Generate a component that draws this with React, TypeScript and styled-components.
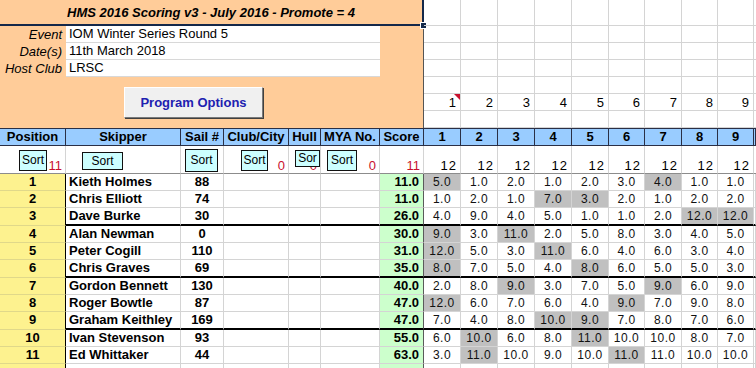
import React from 'react';
import styled, { createGlobalStyle } from 'styled-components';

const GlobalStyle = createGlobalStyle`
  html, body { margin: 0; padding: 0; background: #fff; }
  body {
    font-family: "Liberation Sans", Arial, sans-serif;
    font-size: 13px;
    color: #000;
  }
`;

const COLS = '66px 115px 43px 65px 32px 59px 44px 37px 37px 37px 37px 37px 36px 37px 36px 36px 1fr';
const RACE_COLS = '37px 37px 37px 37px 37px 36px 37px 36px 36px 1fr';
const GRID = '#d4d4d4';
const DARK = '#2a2f45';

const Sheet = styled.div`
  width: 756px;
  height: 368px;
  overflow: hidden;
  display: flex;
  flex-direction: column;
`;

const Top = styled.div`
  display: flex;
  height: 128px;
  flex-shrink: 0;
`;

const Panel = styled.div`
  position: relative;
  width: 424px;
  flex-shrink: 0;
  box-sizing: border-box;
  background: #ffcc99;
  border-right: 1px solid #555;
  display: flex;
  flex-direction: column;
`;

const Title = styled.div`
  height: 26px;
  box-sizing: border-box;
  margin-right: -1px;
  border-bottom: 2px solid #14284a;
  border-right: 2px solid #14284a;
  display: flex;
  align-items: center;
  justify-content: center;
  font-weight: bold;
  font-style: italic;
`;

const Handle = styled.div`
  position: absolute;
  right: -4px;
  top: 22px;
  width: 5px;
  height: 5px;
  background: #14284a;
  border: 1px solid #fff;
`;

const InfoRow = styled.div`
  display: grid;
  grid-template-columns: 66px 314px;
  height: 17px;
`;

const InfoLabel = styled.div`
  text-align: right;
  padding-right: 4px;
  font-style: italic;
  line-height: 17px;
`;

const InfoValue = styled.div`
  background: #fff;
  padding-left: 3px;
  box-sizing: border-box;
  border-bottom: 1px solid #d8d8d8;
  line-height: 16px;
`;

const ButtonRow = styled.div`
  display: flex;
  padding: 10px 0 0 124px;
`;

const ProgramButton = styled.button`
  width: 139px;
  height: 31px;
  background: #f0f0f0;
  border: 1px solid;
  border-color: #fff #7a7a7a #7a7a7a #fff;
  box-shadow: 1px 1px 0 #404040;
  font-family: "Liberation Sans", Arial, sans-serif;
  font-weight: bold;
  font-size: 13px;
  color: #2020b0;
  padding: 0;
`;

const TopGrid = styled.div`
  flex: 1;
  display: grid;
  grid-template-columns: ${RACE_COLS};
  grid-template-rows: 26px repeat(6, 17px);
`;

const GridCell = styled.div`
  position: relative;
  box-sizing: border-box;
  border-right: 1px solid ${GRID};
  border-bottom: 1px solid ${GRID};
  text-align: right;
  padding-right: 3px;
  line-height: 17px;
  letter-spacing: 1px;
`;

const CommentMark = styled.span`
  position: absolute;
  top: 0;
  right: 0;
  width: 0;
  height: 0;
  border-left: 6px solid transparent;
  border-top: 6px solid #c8102e;
`;

const Row = styled.div<{ $h: number }>`
  display: grid;
  grid-template-columns: ${COLS};
  height: ${(p) => p.$h}px;
  flex-shrink: 0;
`;

const HeaderRow = styled(Row)`
  border-top: 1px solid ${DARK};
`;

const HeadCell = styled.div`
  box-sizing: border-box;
  background: #99ccff;
  border-right: 1px solid ${DARK};
  border-bottom: 1px solid ${DARK};
  font-weight: bold;
  text-align: center;
  line-height: 16px;
  white-space: nowrap;
  overflow: hidden;
`;

const SortCell = styled.div<{ $count?: boolean }>`
  position: relative;
  box-sizing: border-box;
  border-right: 1px solid ${GRID};
  border-bottom: 1px solid #8c8c8c;
  display: flex;
  align-items: flex-end;
  justify-content: flex-end;
  padding: 0 3px 0 0;
  color: ${(p) => (p.$count ? '#c8102e' : '#000')};
  letter-spacing: ${(p) => (p.$count ? '0' : '1px')};
  line-height: 15px;
`;

const SortButton = styled.div<{ $x: number; $y: number; $w: number; $h: number }>`
  position: absolute;
  left: ${(p) => p.$x}px;
  top: ${(p) => p.$y}px;
  width: ${(p) => p.$w}px;
  height: ${(p) => p.$h}px;
  box-sizing: border-box;
  background: #ccffff;
  border: 1px solid #111;
  display: flex;
  align-items: center;
  justify-content: center;
  overflow: hidden;
  font-size: 12px;
  color: #000;
  letter-spacing: 0;
  white-space: nowrap;
`;

const Cell = styled.div<{ $thick?: boolean }>`
  box-sizing: border-box;
  border-right: 1px solid ${GRID};
  border-bottom: ${(p) => (p.$thick ? '2px solid #000' : `1px solid ${GRID}`)};
  line-height: 16px;
  white-space: nowrap;
  overflow: hidden;
`;

const PosCell = styled(Cell)`
  background: #fdf28f;
  border-right: 1px solid #000;
  border-bottom: 1px solid #e0d88a;
  font-weight: bold;
  text-align: center;
`;

const NameCell = styled(Cell)`
  font-weight: bold;
  padding-left: 3px;
`;

const SailCell = styled(Cell)`
  font-weight: bold;
  text-align: center;
`;

const ScoreCell = styled(Cell)`
  background: #ccffcc;
  border-right: 1px solid #5a5a5a;
  font-weight: bold;
  text-align: right;
  padding-right: 4px;
`;

const RaceCell = styled(Cell)<{ $discard?: boolean }>`
  background: ${(p) => (p.$discard ? '#c0c0c0' : '#fff')};
  text-align: center;
  font-size: 12px;
  letter-spacing: 0.5px;
  color: #111;
`;

type Result = {
  pos: number;
  name: string;
  sail: string;
  score: string;
  races: number[];
  discards: number[];
};

const results: Result[] = [
  { pos: 1, name: 'Kieth Holmes', sail: '88', score: '11.0', races: [5, 1, 2, 1, 2, 3, 4, 1, 1], discards: [0, 6] },
  { pos: 2, name: 'Chris Elliott', sail: '74', score: '11.0', races: [1, 2, 1, 7, 3, 2, 1, 2, 2], discards: [3, 4] },
  { pos: 3, name: 'Dave Burke', sail: '30', score: '26.0', races: [4, 9, 4, 5, 1, 1, 2, 12, 12], discards: [7, 8] },
  { pos: 4, name: 'Alan Newman', sail: '0', score: '30.0', races: [9, 3, 11, 2, 5, 8, 3, 4, 5], discards: [0, 2] },
  { pos: 5, name: 'Peter Cogill', sail: '110', score: '31.0', races: [12, 5, 3, 11, 6, 4, 6, 3, 4], discards: [0, 3] },
  { pos: 6, name: 'Chris Graves', sail: '69', score: '35.0', races: [8, 7, 5, 4, 8, 6, 5, 5, 3], discards: [0, 4] },
  { pos: 7, name: 'Gordon Bennett', sail: '130', score: '40.0', races: [2, 8, 9, 3, 7, 5, 9, 6, 9], discards: [2, 6] },
  { pos: 8, name: 'Roger Bowtle', sail: '87', score: '47.0', races: [12, 6, 7, 6, 4, 9, 7, 9, 8], discards: [0, 5] },
  { pos: 9, name: 'Graham Keithley', sail: '169', score: '47.0', races: [7, 4, 8, 10, 9, 7, 8, 7, 6], discards: [3, 4] },
  { pos: 10, name: 'Ivan Stevenson', sail: '93', score: '55.0', races: [6, 10, 6, 8, 11, 10, 10, 8, 7], discards: [1, 4] },
  { pos: 11, name: 'Ed Whittaker', sail: '44', score: '63.0', races: [3, 11, 10, 9, 10, 11, 11, 10, 10], discards: [1, 5] },
];

const headers = ['Position', 'Skipper', 'Sail #', 'Club/City', 'Hull', 'MYA No.', 'Score'];
const raceNums = [1, 2, 3, 4, 5, 6, 7, 8, 9];

// floating sort buttons, offsets within their cell
const sortButtons = [
  { x: 19, y: 4, w: 28, h: 21, label: 'Sort', count: '11' },
  { x: 16, y: 6, w: 41, h: 18, label: 'Sort', count: '' },
  { x: 4, y: 3, w: 33, h: 23, label: 'Sort', count: '' },
  { x: 17, y: 4, w: 27, h: 21, label: 'Sort', count: '0' },
  { x: 6, y: 4, w: 25, h: 17, label: 'Sor', count: '0' },
  { x: 6, y: 4, w: 30, h: 21, label: 'Sort', count: '0' },
];

export default function App() {
  return (
    <>
      <GlobalStyle />
      <Sheet>
        <Top>
          <Panel>
            <Title>HMS 2016 Scoring v3 - July 2016 - Promote = 4</Title>
            <Handle />
            <InfoRow>
              <InfoLabel>Event</InfoLabel>
              <InfoValue>IOM Winter Series Round 5</InfoValue>
            </InfoRow>
            <InfoRow>
              <InfoLabel>Date(s)</InfoLabel>
              <InfoValue>11th March 2018</InfoValue>
            </InfoRow>
            <InfoRow>
              <InfoLabel>Host Club</InfoLabel>
              <InfoValue>LRSC</InfoValue>
            </InfoRow>
            <ButtonRow>
              <ProgramButton>Program Options</ProgramButton>
            </ButtonRow>
          </Panel>
          <TopGrid>
            {Array.from({ length: 7 }).map((_, r) =>
              [...raceNums, 0].map((n, c) => (
                <GridCell key={`${r}-${c}`}>
                  {r === 5 && n > 0 ? n : ''}
                  {r === 5 && n === 1 && <CommentMark />}
                </GridCell>
              ))
            )}
          </TopGrid>
        </Top>

        <HeaderRow $h={17}>
          {headers.map((h) => (
            <HeadCell key={h}>{h}</HeadCell>
          ))}
          {raceNums.map((n) => (
            <HeadCell key={n}>{n}</HeadCell>
          ))}
          <HeadCell />
        </HeaderRow>

        <Row $h={28}>
          {sortButtons.map((b, i) => (
            <SortCell key={i} $count>
              {b.count}
              <SortButton $x={b.x} $y={b.y} $w={b.w} $h={b.h}>
                {b.label}
              </SortButton>
            </SortCell>
          ))}
          <SortCell $count>11</SortCell>
          {raceNums.map((n) => (
            <SortCell key={n}>12</SortCell>
          ))}
          <SortCell />
        </Row>

        {results.map((r) => {
          const thick = r.pos % 3 === 0;
          return (
            <Row key={r.pos} $h={thick ? 18 : 17}>
              <PosCell>{r.pos}</PosCell>
              <NameCell $thick={thick}>{r.name}</NameCell>
              <SailCell $thick={thick}>{r.sail}</SailCell>
              <Cell $thick={thick} />
              <Cell $thick={thick} />
              <Cell $thick={thick} />
              <ScoreCell $thick={thick}>{r.score}</ScoreCell>
              {r.races.map((v, i) => (
                <RaceCell key={i} $thick={thick} $discard={r.discards.includes(i)}>
                  {v.toFixed(1)}
                </RaceCell>
              ))}
              <Cell $thick={thick} />
            </Row>
          );
        })}

        <Row $h={17}>
          <PosCell />
          <Cell />
          <Cell />
          <Cell />
          <Cell />
          <Cell />
          <ScoreCell />
          {raceNums.map((n) => (
            <Cell key={n} />
          ))}
          <Cell />
        </Row>
      </Sheet>
    </>
  );
}
